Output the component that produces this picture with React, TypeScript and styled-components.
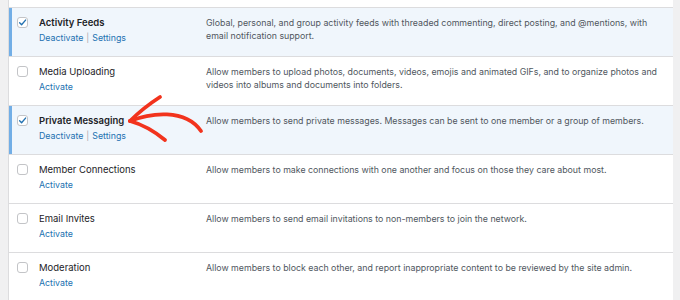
import styled, { createGlobalStyle } from "styled-components";

interface IComponent {
  name: string;
  description: string;
  active: boolean;
}

const components: IComponent[] = [
  {
    name: "Activity Feeds",
    description:
      "Global, personal, and group activity feeds with threaded commenting, direct posting, and @mentions, with email notification support.",
    active: true,
  },
  {
    name: "Media Uploading",
    description:
      "Allow members to upload photos, documents, videos, emojis and animated GIFs, and to organize photos and videos into albums and documents into folders.",
    active: false,
  },
  {
    name: "Private Messaging",
    description:
      "Allow members to send private messages. Messages can be sent to one member or a group of members.",
    active: true,
  },
  {
    name: "Member Connections",
    description:
      "Allow members to make connections with one another and focus on those they care about most.",
    active: false,
  },
  {
    name: "Email Invites",
    description:
      "Allow members to send email invitations to non-members to join the network.",
    active: false,
  },
  {
    name: "Moderation",
    description:
      "Allow members to block each other, and report inappropriate content to be reviewed by the site admin.",
    active: false,
  },
];

function App() {
  return (
    <>
      <GlobalStyle />
      <Page>
        <Table>
          <PrevRowTail />
          {components.map((c) => (
            <Row key={c.name} $active={c.active}>
              <CheckCell>
                <CheckBox>
                  {c.active && (
                    <svg width="9" height="9" viewBox="0 0 10 10">
                      <path
                        d="M1.8 5.3 L4 7.5 L8.4 2.3"
                        fill="none"
                        stroke="#2271b1"
                        strokeWidth="1.5"
                        strokeLinecap="round"
                        strokeLinejoin="round"
                      />
                    </svg>
                  )}
                </CheckBox>
              </CheckCell>
              <NameCell>
                <Name $active={c.active}>{c.name}</Name>
                <Actions>
                  {c.active ? (
                    <>
                      <ActionLink>Deactivate</ActionLink>
                      <Sep>|</Sep>
                      <ActionLink>Settings</ActionLink>
                    </>
                  ) : (
                    <ActionLink>Activate</ActionLink>
                  )}
                </Actions>
              </NameCell>
              <Description>{c.description}</Description>
            </Row>
          ))}
        </Table>
        <ArrowOverlay width="680" height="300" viewBox="0 0 680 300">
          <g
            fill="none"
            stroke="#f2331d"
            strokeWidth="3.8"
            strokeLinecap="round"
            strokeLinejoin="round"
          >
            <path d="M130 121 C 150 113, 185 108, 201 131" />
            <path d="M160 97 Q 143 108 130 121" />
            <path d="M130 121 Q 148 126 165 140" />
          </g>
        </ArrowOverlay>
      </Page>
    </>
  );
}

const GlobalStyle = createGlobalStyle`
  html, body {
    margin: 0;
    padding: 0;
    background: #f0f0f1;
  }
  body {
    font-family: Inter, "Liberation Sans", sans-serif;
    -webkit-font-smoothing: antialiased;
  }
`;

const Page = styled.div`
  position: relative;
  width: 680px;
  height: 300px;
  overflow: hidden;
  padding: 0 7px 0 8px;
  box-sizing: border-box;
`;

const Table = styled.div`
  background: #fff;
  border-left: 1px solid #dcdcde;
  display: flex;
  flex-direction: column;
`;

const PrevRowTail = styled.div`
  height: 7px;
  border-bottom: 1px solid #dcdcde;
`;

const Row = styled.div<{ $active: boolean }>`
  display: grid;
  grid-template-columns: 30px 167px 1fr;
  height: 48px;
  border-bottom: 1px solid #dcdcde;
  background: ${(p) => (p.$active ? "#f0f6fc" : "#fff")};
  box-shadow: ${(p) => (p.$active ? "inset 3px 0 0 #72aee6" : "none")};
`;

const CheckCell = styled.div`
  padding: 9px 0 0 8px;
`;

const CheckBox = styled.div`
  width: 11px;
  height: 11px;
  box-sizing: border-box;
  border: 1px solid #c3c4c7;
  border-radius: 3px;
  background: #fff;
  display: flex;
  align-items: center;
  justify-content: center;
`;

const NameCell = styled.div`
  display: flex;
  flex-direction: column;
  padding-top: 8px;
`;

const Name = styled.div<{ $active: boolean }>`
  font-size: 9.5px;
  line-height: 14px;
  font-weight: ${(p) => (p.$active ? 600 : 400)};
  color: #1d2327;
`;

const Actions = styled.div`
  display: flex;
  align-items: center;
  gap: 3px;
  font-size: 8.8px;
  line-height: 16px;
`;

const ActionLink = styled.span`
  color: #2271b1;
`;

const Sep = styled.span`
  color: #a7aaad;
`;

const Description = styled.div`
  padding: 8px 10px 0 0;
  font-size: 8.8px;
  line-height: 13px;
  color: #50575e;
`;

const ArrowOverlay = styled.svg`
  position: absolute;
  left: 0;
  top: 0;
  pointer-events: none;
`;

export default App;
